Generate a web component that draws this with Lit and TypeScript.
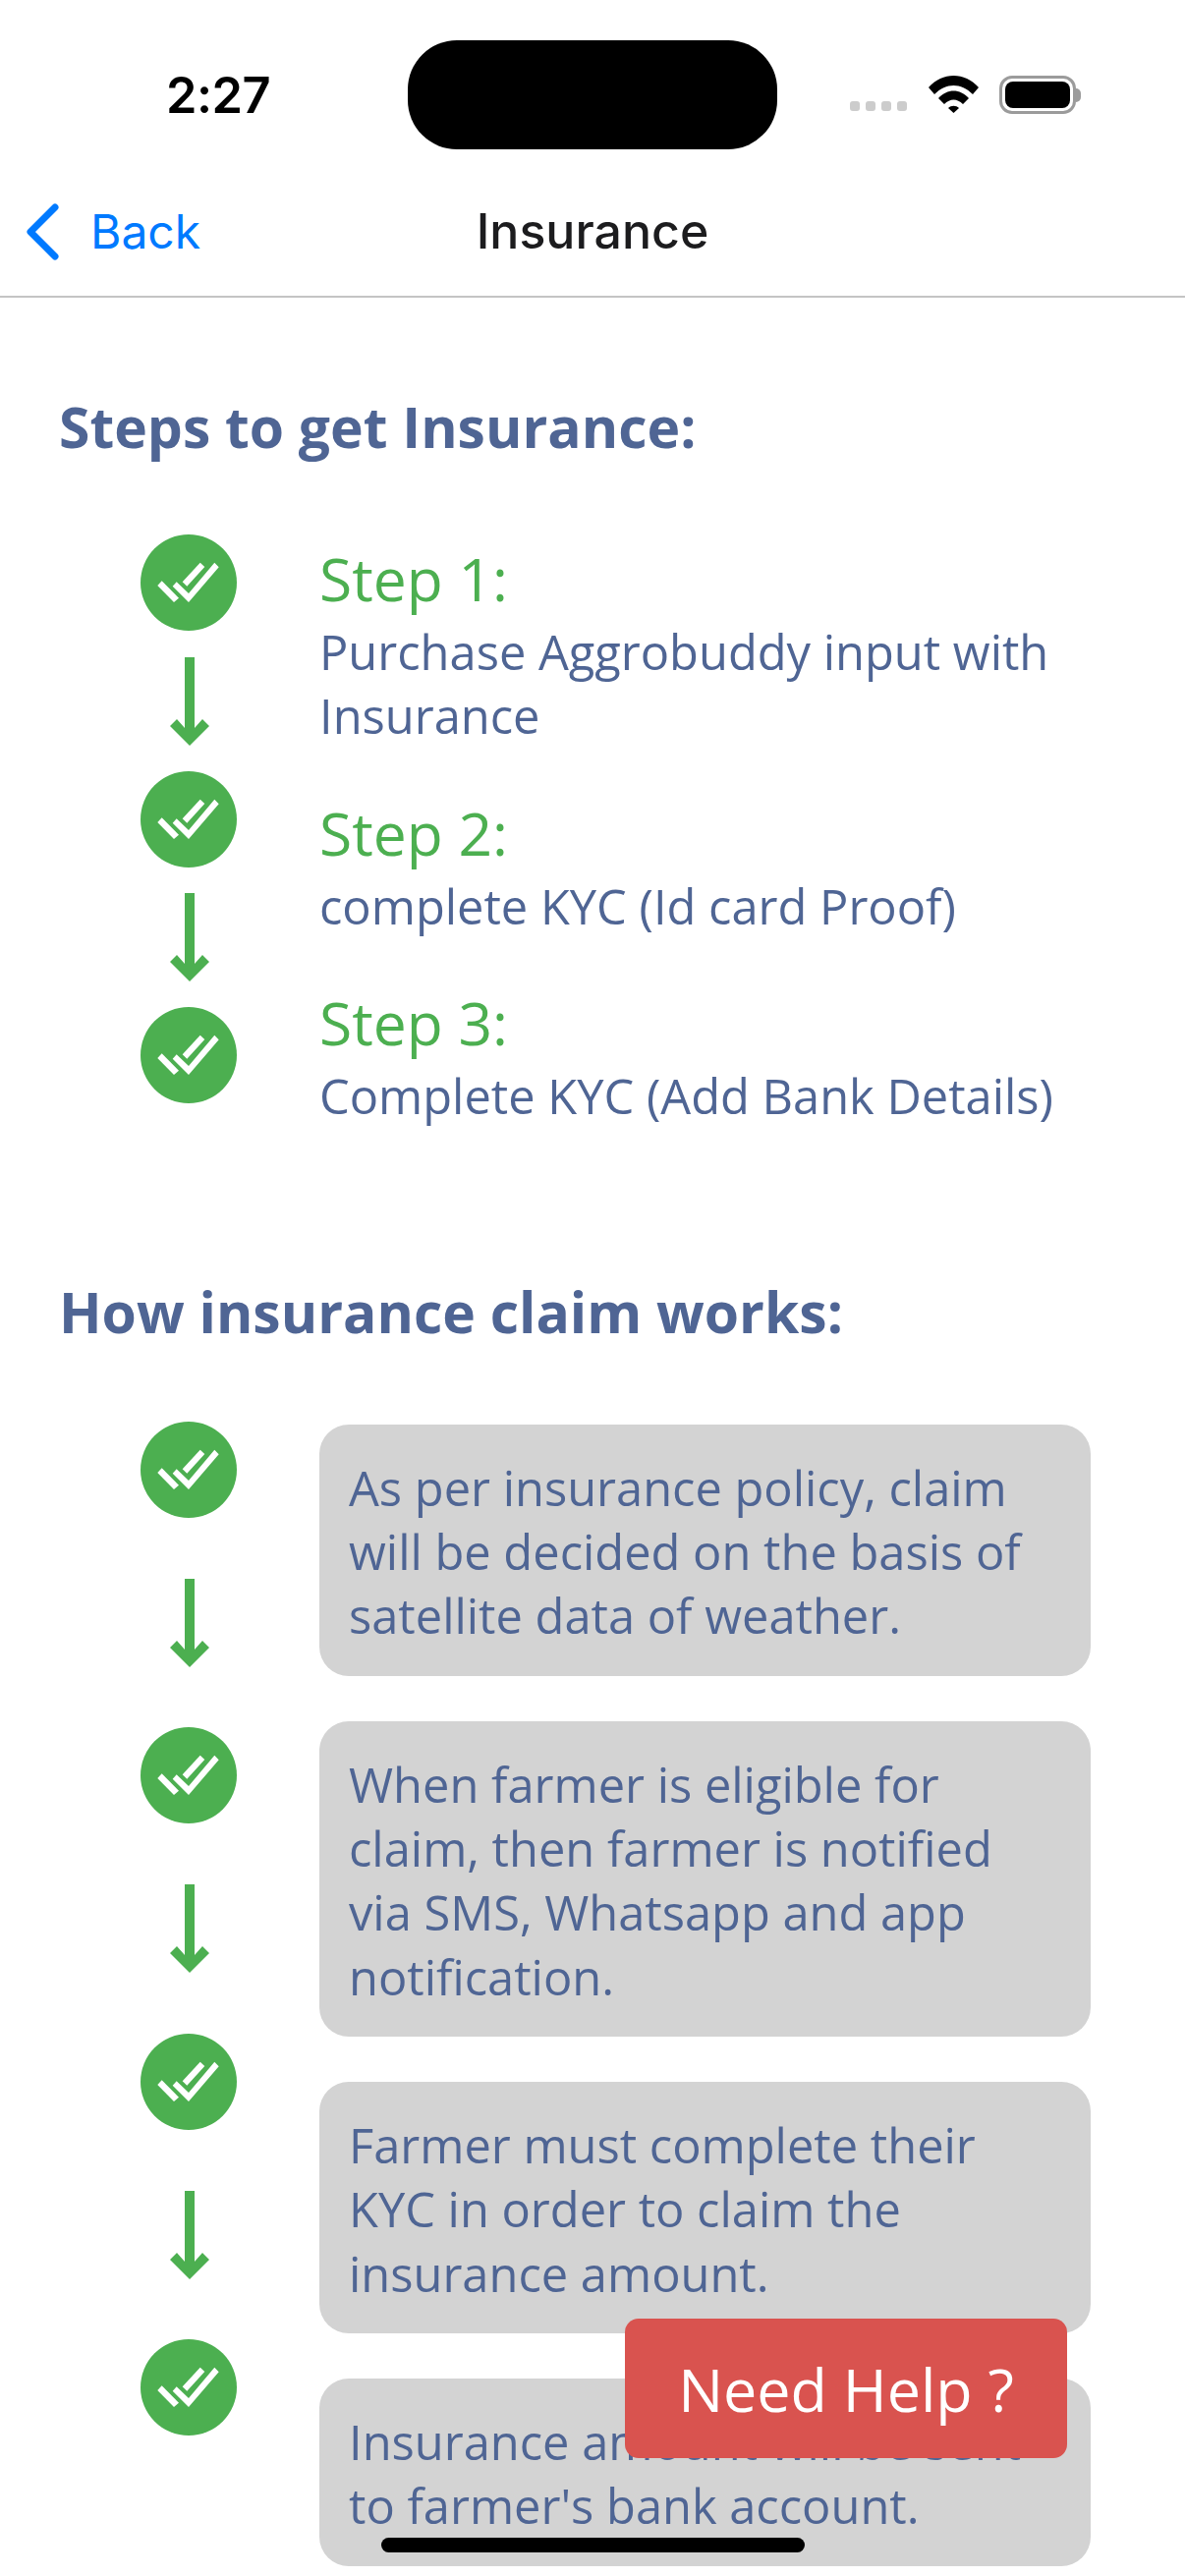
import {LitElement, css, html, svg} from 'lit';
import {customElement} from 'lit/decorators.js';

const STEPS = [
  {label: 'Step 1:', text: 'Purchase Aggrobuddy input with Insurance'},
  {label: 'Step 2:', text: 'complete KYC (Id card Proof)'},
  {label: 'Step 3:', text: 'Complete KYC (Add Bank Details)'},
];

const CLAIMS = [
  'As per insurance policy, claim will be decided on the basis of satellite data of weather.',
  'When farmer is eligible for claim, then farmer is notified via SMS, Whatsapp and app notification.',
  'Farmer must complete their KYC in order to claim the insurance amount.',
  "Insurance amount will be sent to farmer's bank account.",
];

const checkIcon = html`
  <svg class="check" viewBox="0 0 98 98" width="98" height="98">
    <circle cx="49" cy="49" r="49" fill="#4caf50"></circle>
    ${svg`
      <polygon fill="#fff" points="17.3,52 21.7,47.3 39,64.7 34,69"></polygon>
      <polygon fill="#fff" points="32.7,52.7 36.7,48.3 49,60 75.3,28.7 79.7,33.3 49,69"></polygon>
      <polygon fill="#fff" points="42.7,48.3 60.7,28.7 65.3,33 47.3,52.7"></polygon>
    `}
  </svg>
`;

const arrowIcon = html`
  <svg class="arrow" viewBox="0 0 40 90" width="40" height="90">
    <polygon fill="#4caf50" points="15,0 25,0 25,72 33,63 40,70 20,90 0,70 7,63 15,72"></polygon>
  </svg>
`;

@customElement('app-root')
export class AppRoot extends LitElement {
  static styles = css`
    :host {
      display: block;
      position: relative;
      width: 1206px;
      height: 2622px;
      overflow: hidden;
      background: #fff;
      font-family: 'Open Sans', 'Noto Sans', sans-serif;
      color: #4f6594;
    }

    .status {
      display: grid;
      grid-template-columns: 415px 376px 1fr;
      height: 170px;
      box-sizing: border-box;
      padding-top: 41px;
    }

    .time {
      padding: 28px 0 0 169px;
      font: 600 50.5px/56px Inter, 'Liberation Sans', sans-serif;
      letter-spacing: -0.5px;
      color: #000;
    }

    .island {
      height: 111px;
      border-radius: 50px;
      background: #000;
    }

    .status-icons {
      display: flex;
      align-items: flex-start;
      padding: 36px 0 0 74px;
    }

    .dots {
      display: flex;
      gap: 6px;
      margin: 26px 22px 0 0;
    }

    .dots span {
      width: 10px;
      height: 10px;
      border-radius: 3px;
      background: #ccc;
    }

    .battery {
      box-sizing: border-box;
      width: 78px;
      height: 39px;
      margin-left: 21px;
      padding: 3px;
      border: 3px solid #9b9b9b;
      border-radius: 13px;
    }

    .battery div {
      height: 100%;
      border-radius: 8px;
      background: #000;
    }

    .nub {
      width: 5px;
      height: 14px;
      margin-top: 13px;
      border-radius: 0 7px 7px 0;
      background: #9b9b9b;
    }

    .nav {
      display: grid;
      grid-template-columns: 1fr auto 1fr;
      align-items: center;
      height: 131px;
      border-bottom: 2px solid #c4c4c4;
      font-family: Inter, 'Liberation Sans', sans-serif;
      font-size: 48px;
    }

    .back {
      display: flex;
      align-items: center;
      gap: 32px;
      padding-left: 26px;
      color: #007aff;
    }

    .back svg {
      display: block;
    }

    .title {
      font-size: 50px;
      font-weight: 500;
      color: #1c1c1e;
      transform: translateY(-1px);
    }

    main {
      padding: 92px 0 0 60px;
    }

    h2 {
      margin: 0;
      font-size: 57px;
      font-weight: 700;
    }

    .row {
      display: flex;
      margin-top: 71px;
    }

    .icons {
      display: flex;
      flex-direction: column;
      align-items: center;
      flex: none;
      width: 98px;
      margin: 0 84px 0 83px;
    }

    .icons svg {
      display: block;
      flex: none;
    }

    .steps .arrow {
      margin: 26.5px 0 26px 2px;
    }

    .claims .arrow {
      margin: 62px 0 61.5px 2px;
    }

    .texts {
      display: flex;
      flex-direction: column;
      width: 785px;
    }

    .steps .texts {
      gap: 46px;
      padding-top: 4px;
    }

    .claims {
      margin-top: 73px;
    }

    .claims .texts {
      gap: 45.7px;
      padding-top: 3px;
    }

    .label {
      font-size: 60.5px;
      line-height: 82px;
      color: #4caf50;
    }

    .desc {
      font-size: 48.8px;
      line-height: 65.4px;
      padding-top: 1px;
      margin-bottom: -1px;
    }

    .steps {
      margin-bottom: 148px;
    }

    .card {
      padding: 32px 30px 28px;
      border-radius: 30px;
      background: #d3d3d3;
      font-size: 48.8px;
      line-height: 65.4px;
    }

    .help {
      position: absolute;
      left: 636px;
      top: 2360px;
      display: flex;
      align-items: center;
      justify-content: center;
      width: 450px;
      height: 142px;
      border-radius: 14px;
      background: #d9534f;
      color: #fff;
      font-size: 61px;
    }

    .home {
      position: absolute;
      left: 388px;
      top: 2583px;
      width: 431px;
      height: 15px;
      border-radius: 8px;
      background: #000;
    }
  `;

  render() {
    return html`
      <div class="status">
        <div class="time">2:27</div>
        <div class="island"></div>
        <div class="status-icons">
          <div class="dots"><span></span><span></span><span></span><span></span></div>
          <svg viewBox="0 0 51 38" width="51" height="38">
            <path d="M0 12C14-4 37-4 51 12L45 19C33 7 18 7 6 19Z"></path>
            <path d="M10 23C19 13 32 13 41 23L35 29C29 23 22 23 16 29Z"></path>
            <path d="M20 33C23 30 28 30 31 33L25.5 38Z"></path>
          </svg>
          <div class="battery"><div></div></div>
          <div class="nub"></div>
        </div>
      </div>
      <div class="nav">
        <div class="back">
          <svg viewBox="0 0 34 58" width="34" height="58">
            <path d="M30 4 5 29l25 25" fill="none" stroke="#007aff" stroke-width="7" stroke-linecap="round" stroke-linejoin="round"></path>
          </svg>
          <span>Back</span>
        </div>
        <div class="title">Insurance</div>
        <div></div>
      </div>
      <main>
        <h2>Steps to get Insurance:</h2>
        <div class="row steps">
          <div class="icons">
            ${STEPS.map((_, i) => html`${checkIcon}${i < STEPS.length - 1 ? arrowIcon : ''}`)}
          </div>
          <div class="texts">
            ${STEPS.map(s => html`
              <div>
                <div class="label">${s.label}</div>
                <div class="desc">${s.text}</div>
              </div>
            `)}
          </div>
        </div>
        <h2>How insurance claim works:</h2>
        <div class="row claims">
          <div class="icons">
            ${CLAIMS.map((_, i) => html`${checkIcon}${i < CLAIMS.length - 1 ? arrowIcon : ''}`)}
          </div>
          <div class="texts">
            ${CLAIMS.map(c => html`<div class="card">${c}</div>`)}
          </div>
        </div>
      </main>
      <div class="help">Need Help ?</div>
      <div class="home"></div>
    `;
  }
}
